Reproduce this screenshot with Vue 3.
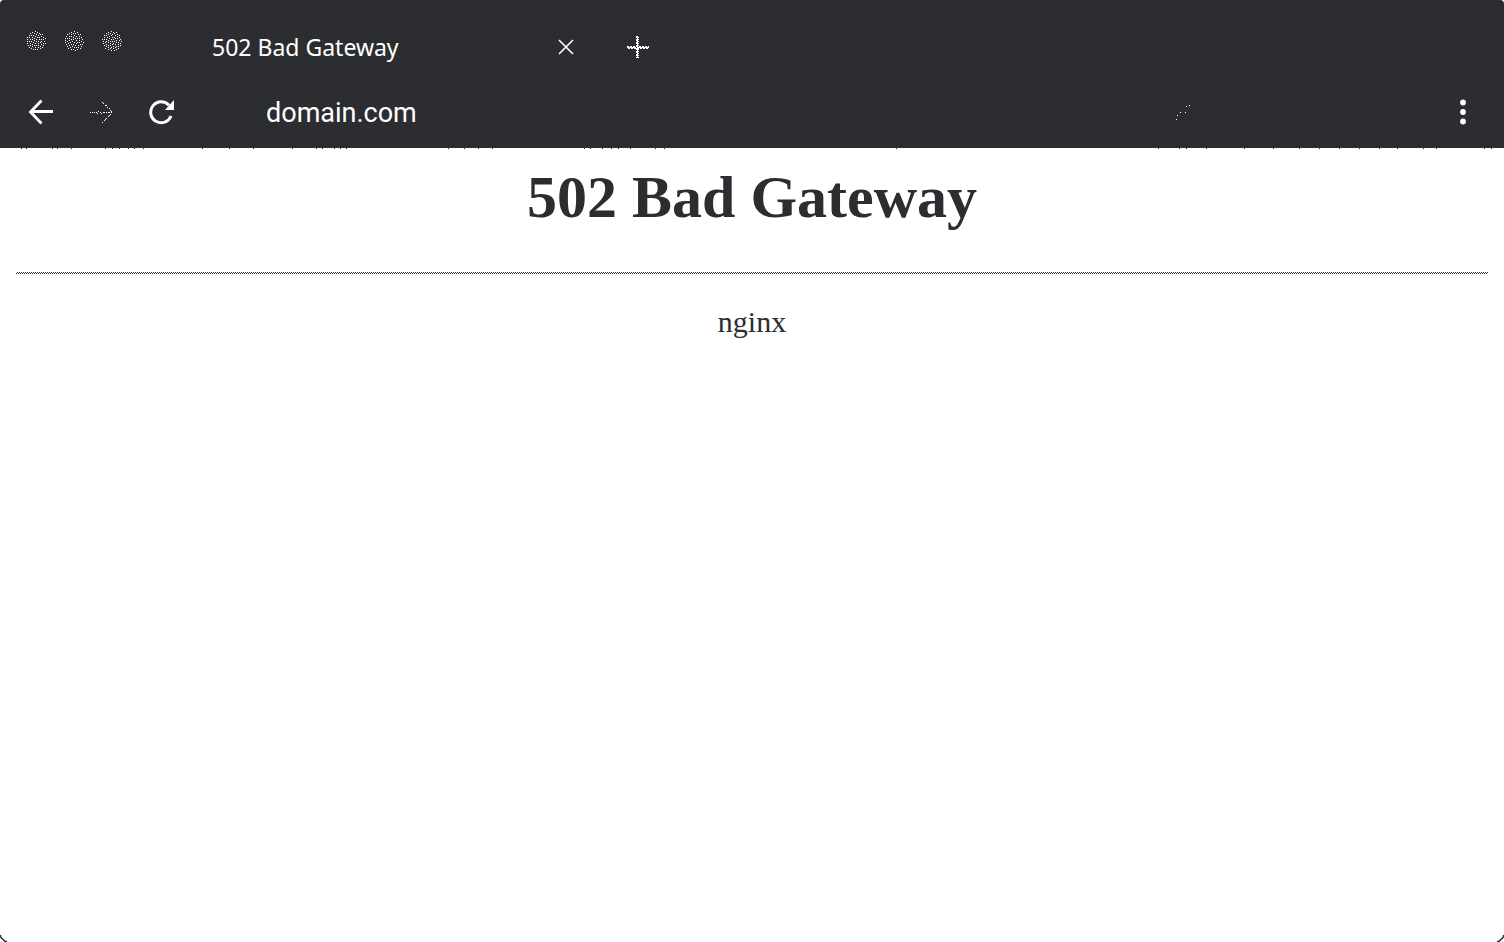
<script setup>
// Error-diffused disc: scatters single pixels at the given density.
function stipple(level) {
  const size = 20
  const value = Array.from({ length: size }, (_, y) =>
    Array.from({ length: size }, (_, x) => ((x - 9.5) ** 2 + (y - 9.5) ** 2 < 102 ? level : 0))
  )
  const spread = (x, y, amount) => {
    if (y < size && x >= 0 && x < size) value[y][x] += amount
  }
  let path = ''
  for (let y = 0; y < size; y++) {
    for (let x = 0; x < size; x++) {
      const inside = (x - 9.5) ** 2 + (y - 9.5) ** 2 < 102
      const on = inside && value[y][x] > 0.34
      const error = value[y][x] - (on ? 1 : 0)
      if (on) path += `M${x} ${y}h1v1h-1z`
      if (!inside) continue
      spread(x + 1, y, (error * 7) / 16)
      spread(x - 1, y + 1, (error * 3) / 16)
      spread(x, y + 1, (error * 5) / 16)
      spread(x + 1, y + 1, error / 16)
    }
  }
  return path
}
const lights = [
  { name: 'Close window', path: stipple(0.21) },
  { name: 'Minimise window', path: stipple(0.2) },
  { name: 'Zoom window', path: stipple(0.22) }
]

const seam = [21, 26, 52, 57, 71, 105, 112, 119, 128, 134, 143, 202, 229, 253, 292, 316, 322, 334, 340, 346, 448, 464, 478, 492, 584, 590, 602, 611, 618, 630, 655, 664, 896, 1158, 1179, 1186, 1206, 1244, 1273, 1299, 1319, 1339, 1359, 1379, 1397, 1423, 1436, 1484, 1491]
const seamPath = seam.map((x) => `M${x} 0h1v1h-1z`).join('')
</script>

<template>
  <div class="window">
    <header class="chrome">
      <div class="tabs">
        <div class="lights">
          <button v-for="light in lights" :key="light.name" type="button" :aria-label="light.name">
            <svg width="20" height="20" viewBox="0 0 20 20" shape-rendering="crispEdges"><path :d="light.path" fill="#fff" /></svg>
          </button>
        </div>
        <div class="tab">
          <span class="title">502 Bad Gateway</span>
          <button type="button" aria-label="Close tab">
            <svg width="16" height="16" viewBox="0 0 16 16"><path d="M1 1l14 14M15 1L1 15" stroke="#fff" stroke-width="1.6" /></svg>
          </button>
        </div>
        <button class="new" type="button" aria-label="New tab">
          <svg width="22" height="22" viewBox="0 0 22 22" shape-rendering="crispEdges">
            <path d="M9 0h2v22h-2zM0 11h22v1H0z" fill="#fff" />
            <path d="M11.500 1v21" stroke="#fff" stroke-dasharray="1 1" />
            <path d="M0 10.500h22M1 12.500h21" stroke="#fff" stroke-dasharray="2 1" />
            <path d="M9.500 2v20" stroke="#2c2d30" stroke-dasharray="1 2" />
          </svg>
        </button>
      </div>
      <div class="toolbar">
        <button type="button" aria-label="Back">
          <svg width="26" height="26" viewBox="0 0 26 26"><path d="M13.500 1.500L2.500 13L13.500 24.500M2.500 12.500H25" fill="none" stroke="#fff" stroke-width="2.800" /></svg>
        </button>
        <button class="forward" type="button" aria-label="Forward">
          <svg width="24" height="22" viewBox="0 0 24 22" shape-rendering="crispEdges">
            <path d="M0 11h1v1h-1zM2 11h1v1h-1zM4 11h1v1h-1zM6 11h1v1h-1zM7 12h1v1h-1zM8 10h1v1h-1zM10 11h1v1h-1zM11 12h1v1h-1zM13 11h2v1h-2zM16 11h1v1h-1zM18 11h2v1h-2zM21 11h1v1h-1zM12 1h1v1h-1zM13 2h1v1h-1zM15 4h2v1h-2zM17 6h1v1h-1zM19 7h1v1h-1zM20 9h1v1h-1zM21 10h1v1h-1zM20 13h1v1h-1zM19 14h1v1h-1zM18 15h1v1h-1zM16 17h1v1h-1zM15 18h1v1h-1zM14 19h1v1h-1zM12 21h1v1h-1z" fill="#fff" />
          </svg>
        </button>
        <button class="reload" type="button" aria-label="Reload">
          <svg width="26" height="26" viewBox="0 0 26 26">
            <path d="M22 17A10.500 10.500 0 1 1 20 6.200" fill="none" stroke="#fff" stroke-width="3" />
            <path d="M25 1v10H16z" fill="#fff" />
          </svg>
        </button>
        <input class="address" type="text" value="domain.com" aria-label="Address" />
        <svg class="glint" width="14" height="15" viewBox="0 0 14 15" shape-rendering="crispEdges">
          <path d="M13 0h1v1h-1zM10 1h1v1h-1zM4 7h1v1h-1zM9 7h1v1h-1zM1 10h1v1h-1zM0 14h1v1h-1z" fill="#fff" />
        </svg>
        <button class="menu" type="button" aria-label="Menu">
          <svg width="6" height="26" viewBox="0 0 6 26" fill="#fff"><circle cx="3" cy="3.500" r="2.900" /><circle cx="3" cy="13" r="2.900" /><circle cx="3" cy="22.500" r="2.900" /></svg>
        </button>
      </div>
    </header>
    <svg class="seam" height="1" shape-rendering="crispEdges"><path :d="seamPath" fill="#2c2d30" /></svg>
    <main>
      <h1>502 Bad Gateway</h1>
      <svg class="rule" height="2">
        <defs>
          <pattern id="rule-dots" width="2" height="2" patternUnits="userSpaceOnUse">
            <path d="M1 0h1v1h-1zM0 1h1v1h-1z" fill="#2c2d30" shape-rendering="crispEdges" />
          </pattern>
        </defs>
        <rect width="100%" height="2" fill="url(#rule-dots)" />
      </svg>
      <p>nginx</p>
    </main>
    <svg class="corner left" width="7" height="7" viewBox="0 0 7 7"><path d="M0.500 0v2L5 6.500h2" fill="none" stroke="#2c2d30" stroke-width="1.500" /></svg>
    <svg class="corner right" width="7" height="7" viewBox="0 0 7 7"><path d="M6.500 0v2L2 6.500H0" fill="none" stroke="#2c2d30" stroke-width="1.500" /></svg>
  </div>
</template>

<style>
body { background: #fff; }
</style>

<style scoped>
.window {
  position: relative;
  min-height: 100vh;
  background: #fff;
  color: #2c2d30;
}
.chrome {
  background: #2c2d30;
  border-radius: 4px 4px 0 0;
  color: #fff;
}
button {
  display: block;
  flex: none;
  padding: 0;
  border: 0;
  background: none;
}
svg { display: block; }
.tabs {
  display: flex;
  align-items: center;
  height: 76px;
  padding: 18px 26px 0;
  box-sizing: border-box;
}
.lights {
  display: flex;
  gap: 18px;
  margin-bottom: 12px;
}
.tab {
  display: flex;
  align-items: center;
  justify-content: space-between;
  width: 362px;
  margin-left: 90px;
}
.title {
  font: 23px/34px "Noto Sans", sans-serif;
}
.new { margin-left: 53px; }
.toolbar {
  display: flex;
  align-items: center;
  height: 72px;
  padding: 0 38px 0 28px;
}
.forward { margin-left: 36px; }
.reload { margin-left: 35px; }
.address {
  flex: 1;
  min-width: 0;
  height: 42px;
  margin-left: 91px;
  padding: 2px 0 0;
  border: 0;
  outline: 0;
  background: none;
  color: #fff;
  font: 27px/40px Roboto, sans-serif;
  box-sizing: border-box;
}
.glint { flex: none; }
.menu { margin-left: 270px; }
.seam { width: 100%; }
main {
  padding: 0 16px;
  font-family: "Liberation Serif", serif;
  text-align: center;
}
h1 {
  margin: 13px 0 40px;
  font-size: 60px;
  line-height: 70px;
}
.rule { width: 100%; }
p {
  margin: 31px 0 0;
  font-size: 30px;
  line-height: 34px;
}
.corner {
  position: absolute;
  bottom: 0;
}
.left { left: 0; }
.right { right: 0; }
</style>
